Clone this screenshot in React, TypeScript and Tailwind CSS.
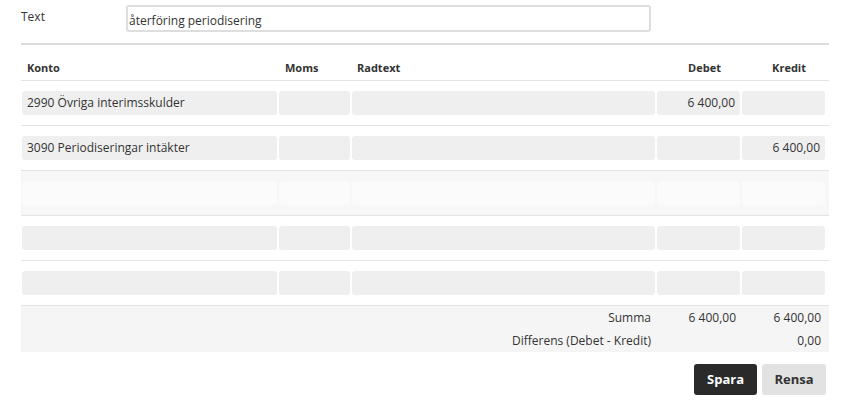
import React from 'react';

type Row = {
  konto: string;
  moms: string;
  radtext: string;
  debet: string;
  kredit: string;
  active?: boolean;
};

const rows: Row[] = [
  { konto: '2990 Övriga interimsskulder', moms: '', radtext: '', debet: '6 400,00', kredit: '' },
  { konto: '3090 Periodiseringar intäkter', moms: '', radtext: '', debet: '', kredit: '6 400,00' },
  { konto: '', moms: '', radtext: '', debet: '', kredit: '', active: true },
  { konto: '', moms: '', radtext: '', debet: '', kredit: '' },
  { konto: '', moms: '', radtext: '', debet: '', kredit: '' },
];

const cols = 'grid grid-cols-[257px_73px_305px_85px_85px]';

function Cell({ value, right, active }: { value: string; right?: boolean; active?: boolean }) {
  return (
    <div className="px-[1px]">
      <div
        className={`h-[24px] rounded-[3px] px-[5px] leading-[24px] truncate ${
          active ? 'bg-[#fbfbfb]' : 'bg-[#efefef]'
        } ${right ? 'text-right' : 'text-left'}`}
      >
        {value}
      </div>
    </div>
  );
}

export default function App() {
  return (
    <div
      className="min-h-screen bg-white text-[12px] text-[#333]"
      style={{ fontFamily: '"Open Sans", "Noto Sans", Arial, sans-serif' }}
    >
      <div className="ml-[21px] w-[808px] pt-[5px]">
        {/* Text field */}
        <div className="flex items-start">
          <label className="w-[105px] pt-[3px] leading-[18px]">Text</label>
          <input
            readOnly
            value="återföring periodisering"
            className="h-[27px] w-[525px] rounded-[3px] border-2 border-[#dedede] bg-white px-[1px] pt-[3px] text-[12px] text-[#333] outline-none"
          />
        </div>

        <div className="mt-[11px] h-[2px] bg-[#dcdcdc]" />

        {/* Header */}
        <div className={`${cols} h-[36px] items-end border-b border-[#e3e3e3] pb-[4px] text-[11px] font-bold leading-4`}>
          <div className="pl-[6px]">Konto</div>
          <div className="pl-[7px]">Moms</div>
          <div className="pl-[6px]">Radtext</div>
          <div className="pr-[20px] text-right">Debet</div>
          <div className="pr-[20px] text-right">Kredit</div>
        </div>

        {/* Rows */}
        {rows.map((row, i) => (
          <div
            key={i}
            className={`border-b border-[#e3e3e3] py-[10px] ${row.active ? 'bg-[#f7f7f7]' : ''}`}
          >
            <div className={cols}>
              <Cell value={row.konto} active={row.active} />
              <Cell value={row.moms} active={row.active} />
              <Cell value={row.radtext} active={row.active} />
              <Cell value={row.debet} right active={row.active} />
              <Cell value={row.kredit} right active={row.active} />
            </div>
          </div>
        ))}

        {/* Totals */}
        <div className="bg-[#f5f5f5]">
          <div className={`${cols} h-[23px] items-center`}>
            <div />
            <div />
            <div className="pr-[5px] text-right">Summa</div>
            <div className="pr-[5px] text-right">6 400,00</div>
            <div className="pr-[5px] text-right">6 400,00</div>
          </div>
          <div className={`${cols} h-[23px] items-center`}>
            <div />
            <div />
            <div className="pr-[5px] text-right">Differens (Debet - Kredit)</div>
            <div />
            <div className="pr-[5px] text-right">0,00</div>
          </div>
        </div>

        {/* Actions */}
        <div className="mt-[12px] flex justify-end gap-[5px] pr-[3px]">
          <button className="h-[31px] w-[63px] rounded-[3px] bg-[#2a2a2a] text-[13px] font-bold text-white">
            Spara
          </button>
          <button className="h-[31px] w-[64px] rounded-[3px] bg-[#e2e2e2] text-[13px] font-bold text-[#333]">
            Rensa
          </button>
        </div>
      </div>
    </div>
  );
}
